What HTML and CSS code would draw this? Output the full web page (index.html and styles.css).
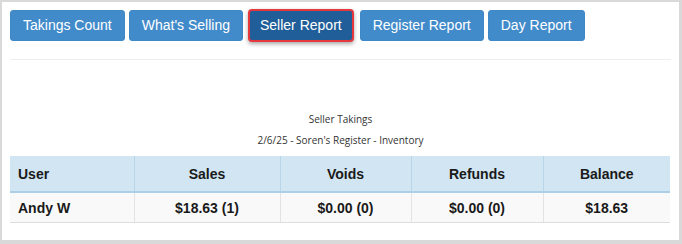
FILE: index.html
```html
<!DOCTYPE html>
<html>
<head>
<meta charset="utf-8">
<link rel="stylesheet" href="styles.css">
</head>
<body>
<div class="page">
  <div class="tabs">
    <button class="btn">Takings Count</button>
    <button class="btn">What's Selling</button>
    <button class="btn active">Seller Report</button>
    <button class="btn">Register Report</button>
    <button class="btn">Day Report</button>
  </div>
  <div class="rule"></div>
  <div class="caption">
    <div class="cap-line">Seller Takings</div>
    <div class="cap-line">2/6/25 - Soren's Register - Inventory</div>
  </div>
  <table class="report">
    <thead>
      <tr>
        <th class="c-user">User</th>
        <th class="c-sales">Sales</th>
        <th class="c-voids">Voids</th>
        <th class="c-refunds">Refunds</th>
        <th class="c-balance">Balance</th>
      </tr>
    </thead>
    <tbody>
      <tr>
        <td class="c-user">Andy W</td>
        <td>$18.63 (1)</td>
        <td>$0.00 (0)</td>
        <td>$0.00 (0)</td>
        <td>$18.63</td>
      </tr>
    </tbody>
  </table>
</div>
</body>
</html>
```
FILE: styles.css
```css
html, body {
  margin: 0;
  padding: 0;
  height: 100%;
}
body {
  background: #d9d9d9;
  font-family: "Liberation Sans", Arial, sans-serif;
}
.page {
  background: #ffffff;
  margin: 2px 3px 0 2px;
  height: 238px;
  box-sizing: border-box;
  padding: 8px 8px 0 8px;
}
.tabs {
  display: flex;
  gap: 4px;
  align-items: flex-start;
}
.btn {
  font-family: "Liberation Sans", Arial, sans-serif;
  font-size: 14px;
  line-height: 17px;
  color: #ffffff;
  background: #428bca;
  border: 1px solid #3f88c8;
  border-radius: 3px;
  padding: 6px 12px;
  margin: 0;
  white-space: nowrap;
}
.btn.active {
  background: #1f5e98;
  border: 2px solid #e5383d;
  border-radius: 4px;
  padding: 6px 10px;
  margin: -1px 2px -1px 1px;
  box-shadow: 0 2px 4px rgba(0, 0, 0, 0.35);
}
.rule {
  height: 1px;
  background: #eeeeee;
  margin-top: 18px;
}
.caption {
  margin-top: 49px;
  text-align: center;
  font-family: "Open Sans", sans-serif;
  font-size: 10px;
  color: #333333;
}
.cap-line {
  line-height: 21px;
}
.report {
  margin-top: 5px;
  width: 660px;
  border-collapse: collapse;
  font-family: "Liberation Sans", Arial, sans-serif;
  font-size: 14px;
  font-weight: bold;
  color: #1a1a1a;
}
.report th {
  background: #d2e5f2;
  border-left: 1px solid #b8d6ea;
  border-bottom: 2px solid #abcfe6;
  height: 36px;
  padding: 0 8px;
  text-align: center;
}
.report td {
  background: #f9f9f9;
  border-left: 1px solid #e3e3e3;
  border-bottom: 1px solid #dddddd;
  height: 29px;
  padding: 0 8px;
  text-align: center;
}
.report th:first-child, .report td:first-child {
  border-left: none;
}
.report .c-user {
  text-align: left;
  width: 124px;
  box-sizing: border-box;
}
.c-sales { width: 146px; box-sizing: border-box; }
.c-voids { width: 131px; box-sizing: border-box; }
.c-refunds { width: 132px; box-sizing: border-box; }
.c-balance { width: 127px; box-sizing: border-box; }
```
